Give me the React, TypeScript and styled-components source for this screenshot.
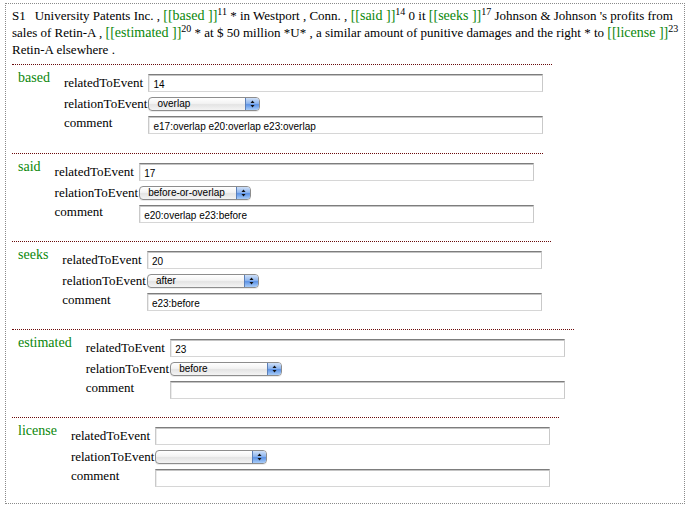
import React from "react";
import styled, { createGlobalStyle } from "styled-components";

const GlobalStyle = createGlobalStyle`
  html, body { margin: 0; padding: 0; background: #fff; }
  body { font-family: "Liberation Serif", "Times New Roman", serif; color: #000; }
`;

const Page = styled.div`
  padding: 3px 0 0 5px;
`;

const SentenceBox = styled.div<{ $trailing?: boolean }>`
  box-sizing: border-box;
  width: 680px;
  border: 1px dotted #8a8a8a;
  padding: 3px 6px 3px 6px;
  margin-bottom: 4px;
  ${(p) => (p.$trailing ? "height: 40px;" : "")}
`;

const Sentence = styled.p`
  margin: 0 0 6px;
  font-size: 13px;
  line-height: 17px;
  white-space: nowrap;
`;

const SentId = styled.span`
  margin-right: 9px;
`;

const EventWord = styled.span`
  color: #0a870a;
  font-size: 14px;
  line-height: 1;
`;

const Sup = styled.sup`
  font-size: 10px;
  line-height: 0;
  vertical-align: 5px;
`;

const EventSection = styled.div`
  display: flex;
  align-items: flex-start;
  width: fit-content;
  border-top: 1px dotted #6b0a0a;
  padding: 5px 9px 10px 6px;
  margin-bottom: 8px;
  &:first-of-type { padding-bottom: 11px; }
  &:last-child { margin-bottom: 0; padding-bottom: 13px; }
`;

const EventName = styled.div`
  color: #0a870a;
  font-size: 14px;
  line-height: 16px;
  margin-right: 14px;
`;

const FieldGrid = styled.div`
  display: grid;
  grid-template-columns: auto 395px;
  margin-top: 4px;
`;

const FieldLabel = styled.div`
  font-size: 13px;
  line-height: 17px;
  white-space: nowrap;
  padding-right: 1px;
`;

const TextField = styled.div<{ $first?: boolean }>`
  box-sizing: border-box;
  width: 395px;
  height: 18px;
  margin: ${(p) => (p.$first ? "0 0 3px" : "2px 0 0")};
  border: 1px solid #c9c9c9;
  border-top-color: #7d7d7d;
  border-bottom-color: #d6d6d6;
  box-shadow: inset 0 1px 0 #c4c4c4, inset 1px 0 0 #ececec;
  background: #fff;
  font-family: "Liberation Sans", Arial, sans-serif;
  font-size: 10px;
  line-height: 17px;
  padding: 1px 0 0 4px;
  color: #000;
  white-space: nowrap;
  overflow: hidden;
`;

const SelectBox = styled.div`
  box-sizing: border-box;
  display: flex;
  width: 112px;
  height: 14px;
  margin: 2px 0 3px;
  border: 1px solid #8d8d8d;
  border-radius: 4px;
  overflow: hidden;
  background: linear-gradient(#ffffff 0%, #f3f3f3 45%, #e4e4e4 55%, #f4f4f4 100%);
  box-shadow: 0 1px 0 rgba(0, 0, 0, 0.08);
`;

const SelectText = styled.div`
  flex: 1;
  font-family: "Liberation Sans", Arial, sans-serif;
  font-size: 10px;
  line-height: 12px;
  padding-left: 8px;
  white-space: nowrap;
`;

const SelectArrow = styled.div`
  width: 13px;
  display: flex;
  align-items: center;
  justify-content: center;
  border-left: 1px solid #5b7fb8;
  background: linear-gradient(#cfe0f8 0%, #8fb6ee 45%, #5d93e6 55%, #a9cdf8 100%);
`;

const Arrows = () => (
  <svg width="5" height="8" viewBox="0 0 5 8">
    <path d="M2.5 0.5 L4.5 3 L0.5 3 Z" fill="#111" />
    <path d="M2.5 7.5 L4.5 5 L0.5 5 Z" fill="#111" />
  </svg>
);

type Ev = { name: string; related: string; relation: string; comment: string };

const events: Ev[] = [
  { name: "based", related: "14", relation: "overlap", comment: "e17:overlap e20:overlap e23:overlap" },
  { name: "said", related: "17", relation: "before-or-overlap", comment: "e20:overlap e23:before" },
  { name: "seeks", related: "20", relation: "after", comment: "e23:before" },
  { name: "estimated", related: "23", relation: "before", comment: "" },
  { name: "license", related: "", relation: "", comment: "" },
];

const EventBlock = ({ ev }: { ev: Ev }) => (
  <EventSection>
    <EventName>{ev.name}</EventName>
    <FieldGrid>
      <FieldLabel>relatedToEvent</FieldLabel>
      <TextField $first>{ev.related}</TextField>
      <FieldLabel>relationToEvent</FieldLabel>
      <SelectBox>
        <SelectText>{ev.relation}</SelectText>
        <SelectArrow>
          <Arrows />
        </SelectArrow>
      </SelectBox>
      <FieldLabel>comment</FieldLabel>
      <TextField>{ev.comment}</TextField>
    </FieldGrid>
  </EventSection>
);

export default function App() {
  return (
    <Page>
      <GlobalStyle />
      <SentenceBox>
        <Sentence>
          <SentId>S1</SentId>University Patents Inc. , <EventWord>[[based ]]</EventWord>
          <Sup>11</Sup> * in Westport , Conn. , <EventWord>[[said ]]</EventWord>
          <Sup>14</Sup> 0 it <EventWord>[[seeks ]]</EventWord>
          <Sup>17</Sup> Johnson &amp; Johnson 's profits from
          <br />
          sales of Retin-A , <EventWord>[[estimated ]]</EventWord>
          <Sup>20</Sup> * at $ 50 million *U* , a similar amount of punitive damages and the right * to{" "}
          <EventWord>[[license ]]</EventWord>
          <Sup>23</Sup>
          <br />
          Retin-A elsewhere .
        </Sentence>
        {events.map((ev) => (
          <EventBlock key={ev.name} ev={ev} />
        ))}
      </SentenceBox>
      <SentenceBox $trailing />
    </Page>
  );
}
